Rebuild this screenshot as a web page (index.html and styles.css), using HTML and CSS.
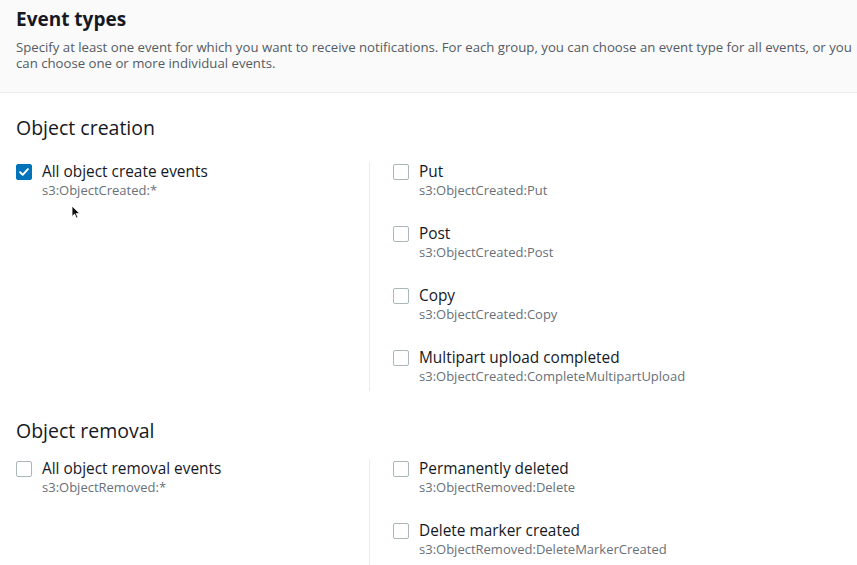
FILE: index.html
```html
<!DOCTYPE html>
<html>
<head>
<meta charset="utf-8">
<link rel="stylesheet" href="styles.css">
</head>
<body>
<div class="panel">
  <header class="header">
    <h2 class="title">Event types</h2>
    <p class="desc">Specify at least one event for which you want to receive notifications. For each group, you can choose an event type for all events, or you can choose one or more individual events.</p>
  </header>
  <section class="group">
    <h3 class="group-title">Object creation</h3>
    <div class="cols">
      <div class="col left">
        <div class="item">
          <span class="box checked"><svg viewBox="0 0 16 16" width="16" height="16"><path d="M3.5 8.2l3 3 6-6.5" fill="none" stroke="#fff" stroke-width="2.2" stroke-linecap="round" stroke-linejoin="round"/></svg></span>
          <div class="text"><div class="label">All object create events</div><div class="sub">s3:ObjectCreated:*</div></div>
        </div>
      </div>
      <div class="col right">
        <div class="item"><span class="box"></span><div class="text"><div class="label">Put</div><div class="sub">s3:ObjectCreated:Put</div></div></div>
        <div class="item"><span class="box"></span><div class="text"><div class="label">Post</div><div class="sub">s3:ObjectCreated:Post</div></div></div>
        <div class="item"><span class="box"></span><div class="text"><div class="label">Copy</div><div class="sub">s3:ObjectCreated:Copy</div></div></div>
        <div class="item"><span class="box"></span><div class="text"><div class="label">Multipart upload completed</div><div class="sub">s3:ObjectCreated:CompleteMultipartUpload</div></div></div>
      </div>
    </div>
  </section>
  <section class="group group-second">
    <h3 class="group-title">Object removal</h3>
    <div class="cols">
      <div class="col left">
        <div class="item"><span class="box"></span><div class="text"><div class="label">All object removal events</div><div class="sub">s3:ObjectRemoved:*</div></div></div>
      </div>
      <div class="col right">
        <div class="item"><span class="box"></span><div class="text"><div class="label">Permanently deleted</div><div class="sub">s3:ObjectRemoved:Delete</div></div></div>
        <div class="item"><span class="box"></span><div class="text"><div class="label">Delete marker created</div><div class="sub">s3:ObjectRemoved:DeleteMarkerCreated</div></div></div>
      </div>
    </div>
  </section>
  <svg class="cursor" width="10" height="14" viewBox="0 0 10 14"><path d="M1 1v10.5l2.6-2.4 1.8 4 1.6-.7-1.8-3.9h3.5z" fill="#111" stroke="#fff" stroke-width="0.8"/></svg>
</div>
</body>
</html>
```
FILE: styles.css
```css
html, body {
  margin: 0;
  padding: 0;
  background: #ffffff;
}
body {
  font-family: "Open Sans", "Noto Sans", "Liberation Sans", sans-serif;
  color: #16191f;
  width: 857px;
  height: 565px;
  overflow: hidden;
}
.panel {
  position: relative;
}
.header {
  background: #fafafa;
  border-bottom: 1px solid #eaeded;
  padding: 7px 4px 21px 16px;
}
.title {
  margin: 0;
  font-size: 19px;
  line-height: 24px;
  font-weight: 700;
}
.desc {
  margin: 8px 0 0;
  font-size: 13.2px;
  line-height: 16px;
  color: #545b64;
}
.group {
  padding: 0 16px;
}
.group-title {
  margin: 0;
  padding-top: 23px;
  font-size: 19.5px;
  line-height: 24px;
  font-weight: 400;
}
.cols {
  display: grid;
  grid-template-columns: 353px 1fr;
  margin-top: 22px;
}
.group-second .group-title {
  padding-top: 28px;
}
.group-second .cols {
  margin-top: 16px;
}
.col.right {
  border-left: 1px solid #eaeded;
  padding-left: 23px;
  display: flex;
  flex-direction: column;
  gap: 26px;
  padding-bottom: 7px;
}
.group-second .col.right {
  padding-bottom: 20px;
}
.item {
  display: flex;
  align-items: flex-start;
  gap: 10px;
}
.box {
  flex: none;
  width: 14px;
  height: 14px;
  border: 1px solid #aab7b8;
  border-radius: 2px;
  margin-top: 2px;
  background: #fff;
  display: flex;
  align-items: center;
  justify-content: center;
}
.box.checked {
  background: #0073bb;
  border-color: #0073bb;
}
.box svg {
  display: block;
  width: 14px;
  height: 14px;
}
.label {
  font-size: 15.4px;
  line-height: 20px;
  color: #16191f;
}
.sub {
  font-size: 13px;
  line-height: 16px;
  color: #687078;
}
.cursor {
  position: absolute;
  left: 71px;
  top: 205px;
}
```
